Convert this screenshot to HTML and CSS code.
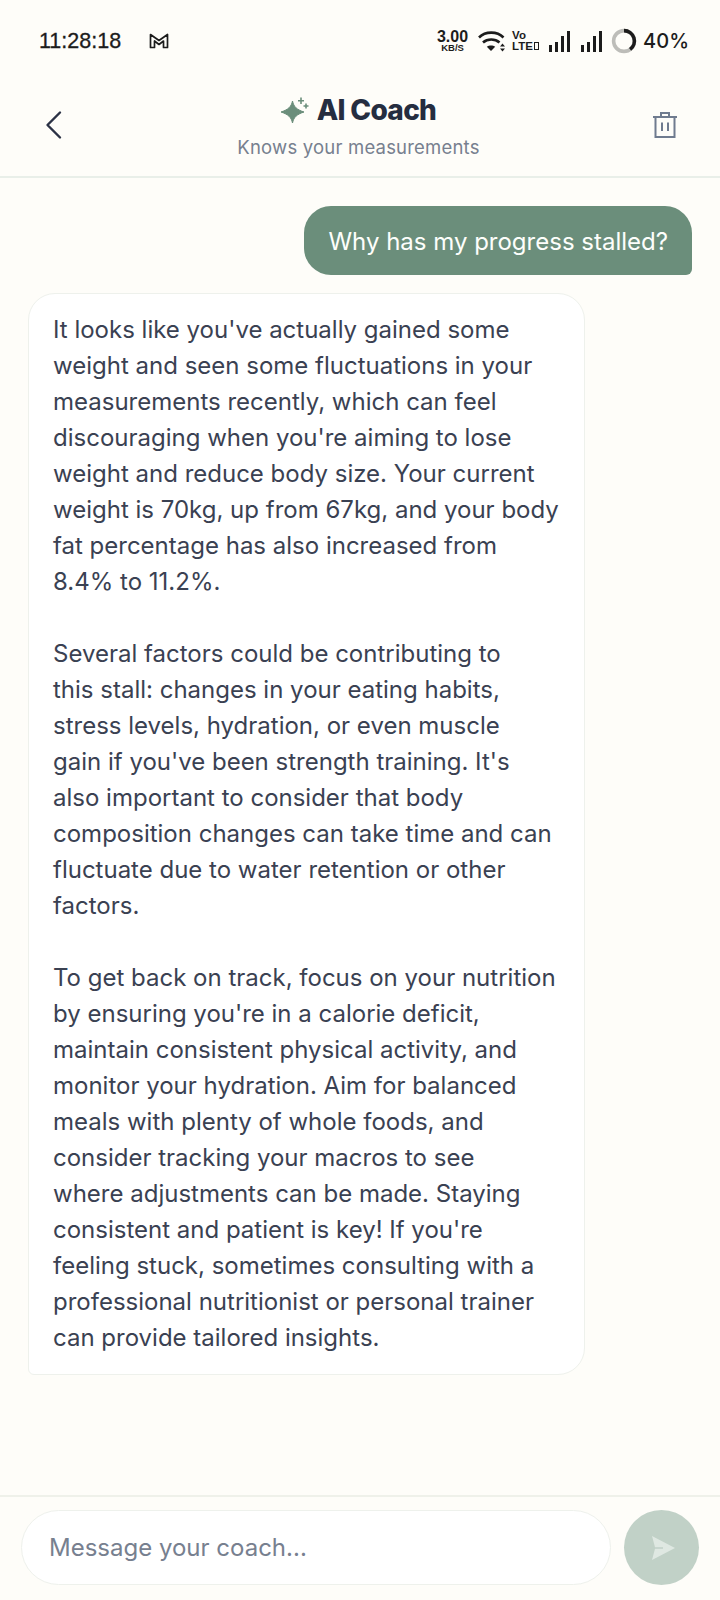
FILE: index.html
```html
<!DOCTYPE html>
<html>
  <head>
    <title>AI Coach</title>
    <link rel="stylesheet" href="styles.css">
  </head>
  <body>
    <div class="screen">
      <div class="status-bar">
        <div class="status-left">
          <span class="clock">11:28:18</span>
          <svg class="gmail" width="20" height="16" viewBox="0 0 20 16" fill="none" stroke="#1c1c1c" stroke-width="1.7" stroke-linejoin="round"><path d="M1.5 1.5 L10 7.5 L18.5 1.5 V14.5 H14.5 V8 L10 11.5 L5.5 8 V14.5 H1.5 Z"/></svg>
        </div>
        <div class="status-right">
          <div class="speed"><span class="speed-num">3.00</span><span class="speed-unit">KB/S</span></div>
          <svg class="wifi" width="28" height="23" viewBox="0 0 28 23" fill="none" stroke="#1c1c1c" stroke-width="2.6"><path d="M1 7.5 C7.5 1 19 1 25.5 7.5"/><path d="M5 12.5 C9.5 8.5 17 8.5 21.5 12.5"/><path d="M13 21 L8.8 16.8 C11 15.2 15 15.2 17.2 16.8 Z" fill="#1c1c1c" stroke="none"/><path d="M24.5 13.5 L27 16.4 H22 Z M24.5 21.5 L27 18.6 H22 Z" fill="#1c1c1c" stroke="none"/></svg>
          <div class="volte"><span>Vo</span><span>LTE<i class="volte-box"></i></span></div>
          <div class="signal"><i class="b1"></i><i class="b2"></i><i class="b3"></i><i class="b4"></i></div>
          <div class="signal"><i class="b1"></i><i class="b2"></i><i class="b3"></i><i class="b4"></i></div>
          <svg class="battery" width="26" height="26" viewBox="0 0 26 26" fill="none" stroke-width="3.6"><circle cx="13" cy="13" r="10.4" stroke="#bdbdb9"/><path d="M13 2.6 A10.4 10.4 0 0 1 19.1 21.4" stroke="#1c1c1c"/></svg>
          <span class="battery-text">40%</span>
        </div>
      </div>

      <header class="top-bar">
        <svg class="back" width="18" height="30" viewBox="0 0 18 30" fill="none" stroke="#2b3245" stroke-width="2.4" stroke-linecap="round" stroke-linejoin="round"><path d="M15 2.5 L2.5 15 L15 27.5"/></svg>
        <div class="title-block">
          <div class="title">
            <svg width="28" height="26" viewBox="0 0 28 26"><path d="M11.5 4 C12.8 9.8 15.5 12.5 23 15 C15.5 17.5 12.8 20.2 11.5 26 C10.2 20.2 7.5 17.5 0 15 C7.5 12.5 10.2 9.8 11.5 4 Z" fill="#6b8e7b" stroke="#6b8e7b" stroke-width="1" stroke-linejoin="round"/><path d="M20 0.5 V7 M17 3.8 H23 M25 6.5 V11.5 M22.5 9 H27.5" stroke="#6b8e7b" stroke-width="1.6"/></svg>
            <h1>AI Coach</h1>
          </div>
          <p>Knows your measurements</p>
        </div>
        <svg class="trash" width="26" height="28" viewBox="0 0 26 28" fill="none" stroke="#6f7b8f" stroke-width="2"><path d="M1 6 H25 M9 6 V2 H17 V6 M3.5 6 V26 H22.5 V6 M10 11.5 V20 M16 11.5 V20"/></svg>
      </header>

      <main class="chat">
        <div class="msg-user">Why has my progress stalled?</div>
        <div class="msg-coach">
          <p>It looks like you've actually gained some<br>weight and seen some fluctuations in your<br>measurements recently, which can feel<br>discouraging when you're aiming to lose<br>weight and reduce body size. Your current<br>weight is 70kg, up from 67kg, and your body<br>fat percentage has also increased from<br>8.4% to 11.2%.</p>
          <p>Several factors could be contributing to<br>this stall: changes in your eating habits,<br>stress levels, hydration, or even muscle<br>gain if you've been strength training. It's<br>also important to consider that body<br>composition changes can take time and can<br>fluctuate due to water retention or other<br>factors.</p>
          <p>To get back on track, focus on your nutrition<br>by ensuring you're in a calorie deficit,<br>maintain consistent physical activity, and<br>monitor your hydration. Aim for balanced<br>meals with plenty of whole foods, and<br>consider tracking your macros to see<br>where adjustments can be made. Staying<br>consistent and patient is key! If you're<br>feeling stuck, sometimes consulting with a<br>professional nutritionist or personal trainer<br>can provide tailored insights.</p>
        </div>
      </main>

      <footer class="composer">
        <div class="input">Message your coach...</div>
        <div class="send">
          <svg width="26" height="28" viewBox="0 0 26 28"><path d="M2 2 L25 14 L2 26 L5 14.8 H13 V13.2 H5 Z" fill="#dfe8e2"/></svg>
        </div>
      </footer>
    </div>
  </body>
</html>
```

FILE: styles.css
```css
html, body {
  margin: 0;
  padding: 0;
  background: #fefdf9;
}
body {
  font-family: Inter, "Open Sans", Arial, sans-serif;
  color: #2b3245;
}
.screen {
  width: 720px;
  height: 1600px;
  display: flex;
  flex-direction: column;
  overflow: hidden;
}

/* status bar */
.status-bar {
  height: 82px;
  box-sizing: border-box;
  padding: 0 31px 0 39px;
  display: flex;
  justify-content: space-between;
  align-items: center;
  color: #1c1c1c;
}
.status-left, .status-right {
  display: flex;
  align-items: center;
}
.clock {
  font-family: "Liberation Sans", Arial, sans-serif;
  font-size: 21.5px;
  -webkit-text-stroke: 0.3px #1c1c1c;
  width: 110px;
}
.speed {
  display: flex;
  flex-direction: column;
  align-items: center;
  font-family: "Liberation Sans", Arial, sans-serif;
  font-weight: bold;
  margin-right: 10px;
}
.speed-num {
  font-size: 16px;
  line-height: 12px;
}
.speed-unit {
  font-size: 9.5px;
  line-height: 9px;
}
.wifi {
  margin-right: 6px;
}
.volte {
  display: flex;
  flex-direction: column;
  font-family: "Liberation Sans", Arial, sans-serif;
  font-weight: bold;
  font-size: 11.5px;
  line-height: 11.5px;
  width: 27px;
  margin-right: 10px;
  white-space: nowrap;
}
.volte-box {
  display: inline-block;
  width: 3px;
  height: 6px;
  margin-left: 1px;
  border: 1.5px solid #1c1c1c;
}
.signal {
  display: flex;
  align-items: flex-end;
  gap: 3px;
  height: 21px;
  margin-right: 11px;
}
.signal i {
  display: block;
  width: 3px;
  background: #1c1c1c;
}
.signal .b1 { height: 7px; }
.signal .b2 { height: 10px; }
.signal .b3 { height: 16px; }
.signal .b4 { height: 21px; }
.signal + .battery {
  margin-left: -2px;
}
.battery {
  margin-right: 6px;
}
.battery-text {
  font-weight: 500;
  font-size: 20px;
}

/* header */
.top-bar {
  height: 96px;
  box-sizing: border-box;
  border-bottom: 2px solid #e9efe9;
  padding: 0 42px 8px 45px;
  display: flex;
  justify-content: space-between;
  align-items: center;
}
.title-block {
  text-align: center;
  margin-right: -2px;
}
.title {
  display: flex;
  justify-content: center;
  align-items: center;
  gap: 8px;
}
.title h1 {
  margin: 0;
  font-size: 28px;
  font-weight: 800;
  letter-spacing: -0.7px;
  color: #252d40;
}
.title-block p {
  margin: 9px 0 0;
  font-size: 18.5px;
  letter-spacing: 0.2px;
  color: #77808f;
}

/* messages */
.chat {
  flex: 1;
  padding: 28px 28px 0;
  display: flex;
  flex-direction: column;
}
.msg-user {
  align-self: flex-end;
  background: #6b8e7b;
  color: #fdfefb;
  font-size: 24px;
  line-height: 32px;
  padding: 20px 24px 17px;
  border-radius: 27px 27px 6px 27px;
}
.msg-coach {
  width: 557px;
  box-sizing: border-box;
  margin-top: 18px;
  padding: 18px 24px 18px 24px;
  background: #fff;
  border: 1px solid #eef1ec;
  border-radius: 27px 27px 27px 6px;
  font-size: 24px;
  line-height: 36px;
  color: #3a4152;
}
.msg-coach p {
  margin: 0 0 36px;
  white-space: nowrap;
}
.msg-coach p:last-child {
  margin-bottom: 0;
}

/* composer */
.composer {
  height: 105px;
  box-sizing: border-box;
  border-top: 2px solid #eff1ea;
  padding: 13px 21px 0 21px;
  display: flex;
  align-items: flex-start;
  gap: 13px;
}
.input {
  width: 590px;
  height: 75px;
  box-sizing: border-box;
  padding-left: 27px;
  background: #fff;
  border: 1.5px solid #eef1ec;
  border-radius: 38px;
  font-size: 24px;
  line-height: 74px;
  color: #77808f;
}
.send {
  width: 75px;
  height: 75px;
  border-radius: 50%;
  background: #c1d1c7;
  display: flex;
  align-items: center;
  justify-content: center;
  padding-left: 2px;
  box-sizing: border-box;
}
```
